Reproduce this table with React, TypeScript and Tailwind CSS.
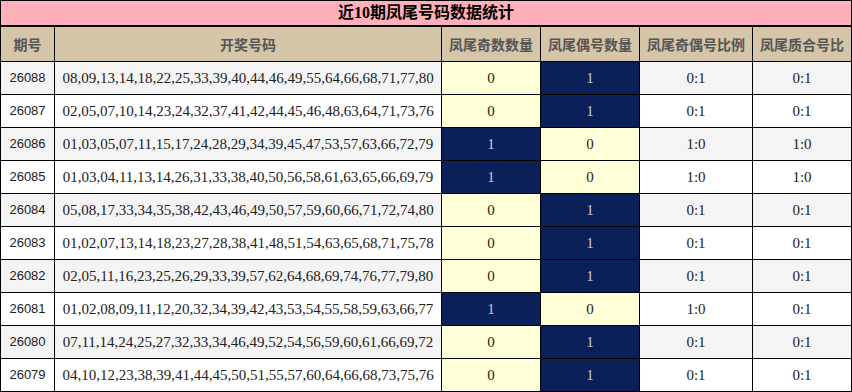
import React from "react";

const rows: [string, string, number, number, string, string][] = [
  ["26088", "08,09,13,14,18,22,25,33,39,40,44,46,49,55,64,66,68,71,77,80", 0, 1, "0:1", "0:1"],
  ["26087", "02,05,07,10,14,23,24,32,37,41,42,44,45,46,48,63,64,71,73,76", 0, 1, "0:1", "0:1"],
  ["26086", "01,03,05,07,11,15,17,24,28,29,34,39,45,47,53,57,63,66,72,79", 1, 0, "1:0", "1:0"],
  ["26085", "01,03,04,11,13,14,26,31,33,38,40,50,56,58,61,63,65,66,69,79", 1, 0, "1:0", "1:0"],
  ["26084", "05,08,17,33,34,35,38,42,43,46,49,50,57,59,60,66,71,72,74,80", 0, 1, "0:1", "0:1"],
  ["26083", "01,02,07,13,14,18,23,27,28,38,41,48,51,54,63,65,68,71,75,78", 0, 1, "0:1", "0:1"],
  ["26082", "02,05,11,16,23,25,26,29,33,39,57,62,64,68,69,74,76,77,79,80", 0, 1, "0:1", "0:1"],
  ["26081", "01,02,08,09,11,12,20,32,34,39,42,43,53,54,55,58,59,63,66,77", 1, 0, "1:0", "0:1"],
  ["26080", "07,11,14,24,25,27,32,33,34,46,49,52,54,56,59,60,61,66,69,72", 0, 1, "0:1", "0:1"],
  ["26079", "04,10,12,23,38,39,41,44,45,50,51,55,57,60,64,66,68,73,75,76", 0, 1, "0:1", "0:1"],
];

const cols = "grid grid-cols-[53px_386px_98px_98px_112px_98px] gap-px";
const serif = "font-['Liberation_Serif','Noto_Sans_CJK_SC',serif]";
const cjk = "font-['Noto_Sans_CJK_SC','Noto_Sans',sans-serif]";

function Flag({ v }: { v: number }) {
  return v === 1 ? (
    <div className={`bg-[#0b1f58] text-[#c8ccd8] flex items-center justify-center text-[15px] ${serif}`}>1</div>
  ) : (
    <div className={`bg-[#ffffd8] text-[#222] flex items-center justify-center text-[15px] ${serif}`}>0</div>
  );
}

export default function App() {
  const headers = ["期号", "开奖号码", "凤尾奇数数量", "凤尾偶号数量", "凤尾奇偶号比例", "凤尾质合号比"];
  return (
    <div className="w-[852px] h-[392px] bg-black p-px flex flex-col">
      <div className={`h-[24px] bg-[#ffb1bb] flex items-center justify-center text-[16px] font-bold text-black ${serif}`}>
        <span>近10期凤尾号码数据统计</span>
      </div>
      <div className={`${cols} mt-[2px]`}>
        {headers.map((h) => (
          <div key={h} className={`h-[34px] bg-[#d5c5a9] flex items-center justify-center text-[14px] font-semibold text-[#555] ${cjk}`}>
            {h}
          </div>
        ))}
      </div>
      {rows.map((r, i) => {
        const bg = i % 2 === 0 ? "bg-[#f4f4f4]" : "bg-white";
        return (
          <div key={r[0]} className={`${cols} mt-px h-[32px]`}>
            <div className={`${bg} flex items-center justify-center text-[13px] text-[#222] font-['Liberation_Sans',sans-serif]`}>
              {r[0]}
            </div>
            <div className={`${bg} flex items-center justify-center text-[15px] text-[#222] ${serif}`}>{r[1]}</div>
            <Flag v={r[2]} />
            <Flag v={r[3]} />
            <div className={`${bg} flex items-center justify-center text-[15px] text-[#222] ${serif}`}>{r[4]}</div>
            <div className={`${bg} flex items-center justify-center text-[15px] text-[#222] ${serif}`}>{r[5]}</div>
          </div>
        );
      })}
    </div>
  );
}
